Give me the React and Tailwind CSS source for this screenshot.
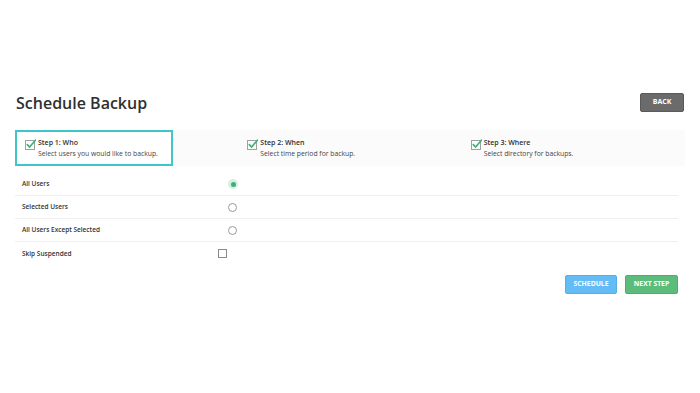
import React, { useState } from "react";

const steps = [
  { title: "Step 1: Who", sub: "Select users you would like to backup." },
  { title: "Step 2: When", sub: "Select time period for backup." },
  { title: "Step 3: Where", sub: "Select directory for backups." },
];

const options = ["All Users", "Selected Users", "All Users Except Selected"];

function StepCheck() {
  return (
    <svg width="11" height="11" viewBox="0 0 11 11" className="shrink-0">
      <rect x="0.5" y="1.5" width="9" height="9" fill="none" stroke="#9aa3a0" strokeWidth="1" />
      <path d="M2.3 5.6 L4.6 8 L10.4 1.2" fill="none" stroke="#3fae7a" strokeWidth="1.6" strokeLinecap="round" />
    </svg>
  );
}

export default function App() {
  const [choice, setChoice] = useState(0);
  const [skip, setSkip] = useState(false);

  return (
    <div
      className="w-[700px] h-[393px] bg-white text-[#333]"
      style={{ fontFamily: "'Open Sans', 'Noto Sans', sans-serif" }}
    >
      <div className="pt-[93px] px-[15px]">
        {/* HEADER */}
        <div className="flex items-center justify-between h-[19px]">
          <h1 className="pl-px text-[16px] font-semibold text-[#2f2f2f] leading-none">
            Schedule Backup
          </h1>
          <button className="mr-[1px] w-[44px] h-[19px] rounded-[2px] bg-[#6b6b6b] border border-[#5a5a5a] text-white text-[7px] font-bold">
            BACK
          </button>
        </div>

        {/* STEPS */}
        <div className="mt-[18px] grid grid-cols-3 h-[36px] bg-[#fbfbfb]">
          {steps.map((s, i) => (
            <div key={s.title} className="flex">
              <div
                className={`flex gap-[2px] pt-[7px] ${
                  i === 0 ? "w-[158px] pl-[8px] border-2 border-[#3fc6c8] bg-white" : "pl-[9px] pt-[9px]"
                }`}
              >
                <StepCheck />
                <div className="leading-none">
                  <div className="text-[7px] font-semibold text-[#2f2f2f]">{s.title}</div>
                  <div className="text-[6.8px] text-[#444] mt-[5px]">{s.sub}</div>
                </div>
              </div>
            </div>
          ))}
        </div>

        {/* OPTIONS */}
        <div className="mt-[7px] pr-[7px]">
          {options.map((o, i) => (
            <div
              key={o}
              onClick={() => setChoice(i)}
              className="flex items-center h-[23px] border-b border-[#efefef]"
            >
              <div className="w-[213px] pl-[7px] text-[6.5px] font-semibold text-[#333]">{o}</div>
              {choice === i ? (
                <span className="w-[10px] h-[10px] rounded-full bg-[#d3f0e3] flex items-center justify-center">
                  <span className="w-[5px] h-[5px] rounded-full bg-[#3fae7a]" />
                </span>
              ) : (
                <span className="w-[9px] h-[9px] rounded-full border border-[#9a9a9a] bg-white" />
              )}
            </div>
          ))}
          <div className="flex items-center h-[23px]" onClick={() => setSkip(!skip)}>
            <div className="w-[203px] pl-[7px] text-[6.5px] font-semibold text-[#333]">Skip Suspended</div>
            <span className="w-[9px] h-[9px] border border-[#8a8a8a] bg-white flex items-center justify-center">
              {skip && <span className="w-[5px] h-[5px] bg-[#3fae7a]" />}
            </span>
          </div>
        </div>

        {/* FOOTER */}
        <div className="mt-[10px] flex justify-end gap-[8px] pr-[7px]">
          <button className="w-[52px] h-[19px] rounded-[2px] bg-[#63bcf5] border border-[#55aee6] text-white text-[6.8px] font-bold">
            SCHEDULE
          </button>
          <button className="w-[53px] h-[19px] rounded-[2px] bg-[#5cbc7c] border border-[#4fae6f] text-white text-[6.8px] font-bold">
            NEXT STEP
          </button>
        </div>
      </div>
    </div>
  );
}
